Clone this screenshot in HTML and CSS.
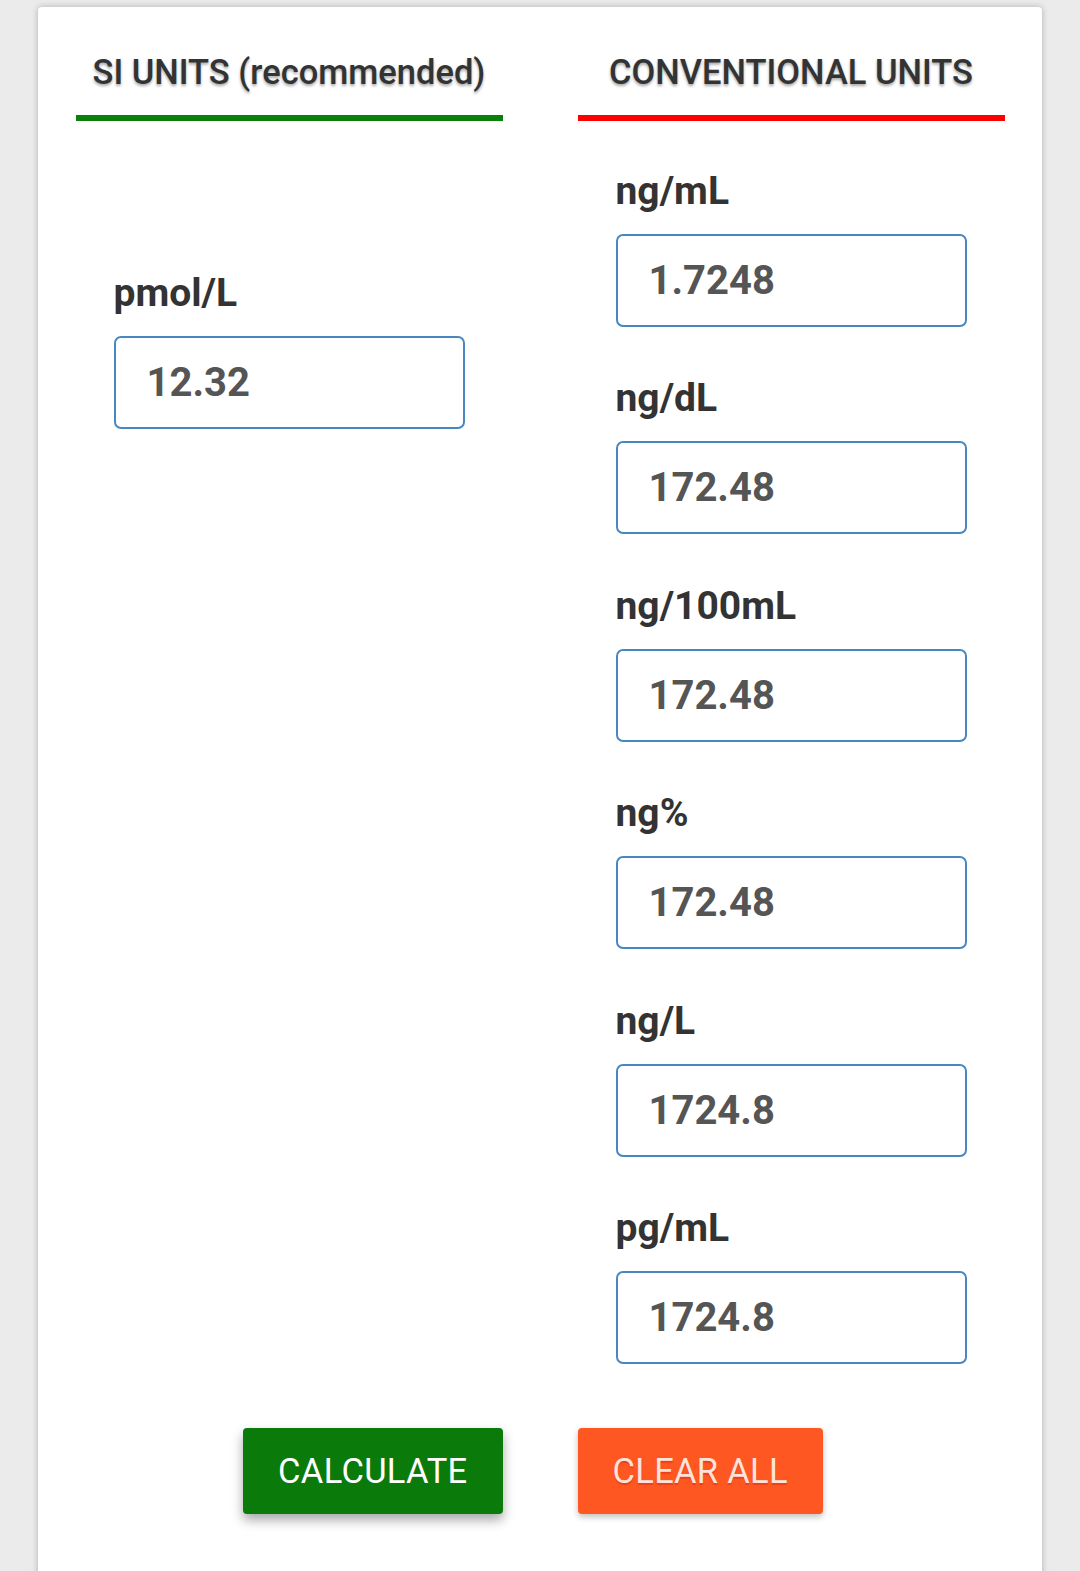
FILE: index.html
```html
<!DOCTYPE html>
<html lang="en">
<head>
<meta charset="utf-8">
<title>Unit converter</title>
<link rel="stylesheet" href="styles.css">
</head>
<body>
<div class="card">
  <div class="cols">
    <div class="col">
      <div class="head head-si">SI UNITS (recommended)</div>
      <div class="fields fields-si">
        <div class="field">
          <label class="lbl">pmol/L</label>
          <div class="inp">12.32</div>
        </div>
      </div>
    </div>
    <div class="col">
      <div class="head head-conv">CONVENTIONAL UNITS</div>
      <div class="fields">
        <div class="field"><label class="lbl">ng/mL</label><div class="inp">1.7248</div></div>
        <div class="field"><label class="lbl">ng/dL</label><div class="inp">172.48</div></div>
        <div class="field"><label class="lbl">ng/100mL</label><div class="inp">172.48</div></div>
        <div class="field"><label class="lbl">ng%</label><div class="inp">172.48</div></div>
        <div class="field"><label class="lbl">ng/L</label><div class="inp">1724.8</div></div>
        <div class="field"><label class="lbl">pg/mL</label><div class="inp">1724.8</div></div>
      </div>
    </div>
  </div>
  <div class="actions">
    <div class="act act-left"><button class="btn btn-calc">CALCULATE</button></div>
    <div class="act act-right"><button class="btn btn-clear">CLEAR ALL</button></div>
  </div>
</div>
</body>
</html>
```
FILE: styles.css
```css
html, body {
  margin: 0;
  padding: 0;
  background: #ebebeb;
  font-family: Roboto, "Liberation Sans", sans-serif;
  height: 1571px;
  overflow: hidden;
}
.card {
  margin: 7px 38px 0 38px;
  background: #fff;
  border-radius: 4px 4px 0 0;
  box-shadow: 0 0 6px rgba(0,0,0,0.25);
  min-height: 1600px;
  padding-top: 45px;
}
.cols {
  display: grid;
  grid-template-columns: 1fr 1fr;
}
.col {
  padding: 0 37.5px;
}
.head {
  text-align: center;
  font-size: 34.5px;
  font-weight: 500;
  color: #333;
  line-height: 40px;
  padding-bottom: 23px;
  text-shadow: 0 2px 3px rgba(0,0,0,0.35);
}
.head-si { border-bottom: 6px solid #0a800a; }
.head-conv { border-bottom: 6px solid #ff0000; }
.fields {
  padding: 0 38px;
}
.fields-si {
  padding-top: 102px;
}
.field {
  margin-top: 49.4px;
}
.field:first-child {
  margin-top: 48px;
}
.lbl {
  display: block;
  font-size: 39px;
  font-weight: 700;
  color: #333;
  line-height: 44px;
  margin-bottom: 21px;
}
.inp {
  box-sizing: border-box;
  height: 93px;
  border: 2px solid #4a86c0;
  border-radius: 7px;
  padding-left: 31px;
  font-size: 40px;
  font-weight: 700;
  color: #555;
  line-height: 89px;
}
.actions {
  display: grid;
  grid-template-columns: 1fr 1fr;
  margin-top: 64px;
}
.act { padding: 0 37.5px; display: flex; }
.act-left { justify-content: flex-end; }
.act-right { justify-content: flex-start; }
.btn {
  font-family: Roboto, "Liberation Sans", sans-serif;
  font-size: 34.5px;
  font-weight: 400;
  height: 86px;
  padding: 0 35px;
  border: none;
  border-radius: 4px;
  letter-spacing: 0.3px;
}
.btn-calc {
  background: #0a7a0a;
  color: #fff;
  box-shadow: 0 6px 12px rgba(0,0,0,0.35);
}
.btn-clear {
  background: #ff5722;
  color: #fde3da;
  box-shadow: 0 3px 6px rgba(0,0,0,0.25);
  text-shadow: 0 2px 1px rgba(220,40,20,0.5);
}
```
